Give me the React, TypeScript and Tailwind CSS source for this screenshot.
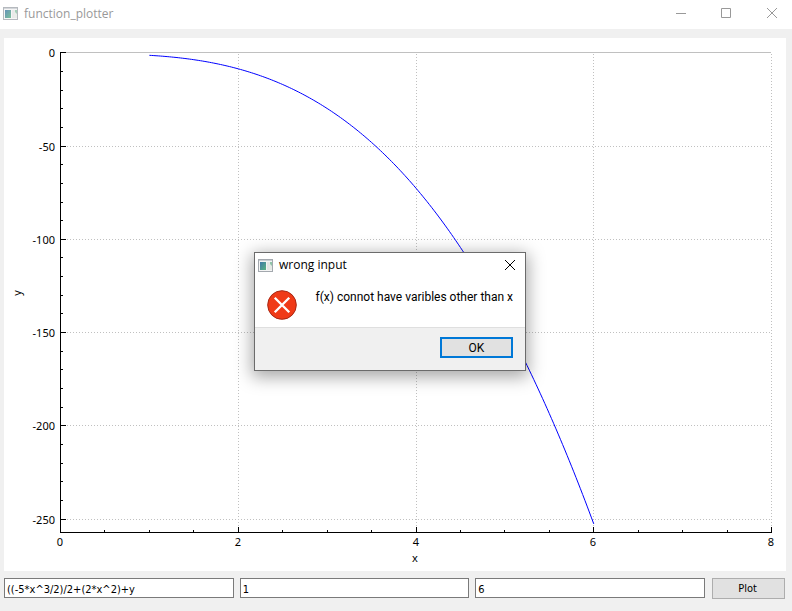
import React from "react";

const sx = (x: number) => 56.5 + (x * 711) / 8;
const sy = (y: number) => 14.8 - y * 1.865;

const curve = Array.from({ length: 201 }, (_, i) => {
  const x = 1 + (i * 5) / 200;
  const y = -1.25 * x ** 3 + 0.5 * x ** 2 - 0.6;
  return `${sx(x).toFixed(2)},${sy(y).toFixed(2)}`;
}).join(" ");

const xs = [0, 2, 4, 6, 8];
const ys = [0, -50, -100, -150, -200, -250];
const snap = (v: number) => Math.floor(v) + 0.5;

function AppIcon({ className = "" }: { className?: string }) {
  return (
    <svg className={"h-[13px] w-[15px] shrink-0 " + className} viewBox="0 0 15 13" aria-hidden="true">
      <defs>
        <linearGradient id="pane" x1="0" y1="0" x2="1" y2="1">
          <stop offset="0" stopColor="#3f78a8" />
          <stop offset="1" stopColor="#5bb381" />
        </linearGradient>
      </defs>
      <rect x=".5" y=".5" width="14" height="12" fill="#f4f4f4" stroke="#a3a8ae" />
      <rect x="1" y="1" width="13" height="1" fill="#c9cdd2" />
      <rect x="2" y="3" width="6" height="8" fill="url(#pane)" />
      <rect x="9" y="3" width="2" height="8" fill="#e4e4e4" />
      <rect x="11" y="3" width="3" height="8" fill="#e4e9e4" />
      <path d="M14 3V7L12 5V3Z" fill="#8fc4a8" />
    </svg>
  );
}

function Plot() {
  return (
    <svg className="block w-full" viewBox="0 0 782 533" fontSize="11" fill="#000" role="img" aria-label="Plot of the function">
      <g stroke="#c0c0c0" strokeDasharray="1 2" shapeRendering="crispEdges">
        {xs.slice(1).map((x) => (
          <line key={x} x1={snap(sx(x))} x2={snap(sx(x))} y1="494" y2="14" />
        ))}
        {ys.slice(1).map((y) => (
          <line key={y} x1="57" x2="767" y1={snap(sy(y))} y2={snap(sy(y))} />
        ))}
      </g>
      <line x1="57" x2="767" y1="14.5" y2="14.5" stroke="#c0c0c0" />
      <polyline points={curve} fill="none" stroke="#0000ff" strokeWidth="1" />
      <g stroke="#000" shapeRendering="crispEdges">
        <path d="M56.5 14V495M56 494.5H768" />
        {Array.from({ length: 17 }, (_, i) => (
          <line key={i} x1={snap(sx(i / 2))} x2={snap(sx(i / 2))} y1={i % 4 ? 492 : 489} y2="495" />
        ))}
        {Array.from({ length: 26 }, (_, i) => (
          <line key={i} x1="57" x2={i % 5 ? 59 : 62} y1={snap(sy(-i * 10))} y2={snap(sy(-i * 10))} />
        ))}
      </g>
      <g textAnchor="end">
        {ys.map((y) => (
          <text key={y} x="51" y={Math.floor(sy(y)) + 5}>{y}</text>
        ))}
      </g>
      <g textAnchor="middle">
        {xs.map((x) => (
          <text key={x} x={Math.floor(sx(x))} y="508">{x}</text>
        ))}
        <text x="411" y="524">x</text>
        <text transform="translate(17 255) rotate(-90)">y</text>
      </g>
    </svg>
  );
}

const field =
  "h-5 min-w-0 flex-1 border border-[#7a7a7a] bg-white px-0.5 pt-0.5 font-['DejaVu_Sans_Condensed','DejaVu_Sans',sans-serif] text-[11px] text-black outline-none";

export default function App() {
  return (
    <div className="relative flex min-h-screen flex-col bg-[#f0f0f0] font-['Noto_Sans',sans-serif] text-black">
      <header className="flex h-[29px] items-center bg-white pb-0.5 pl-[3px] text-xs text-[#999]">
        <AppIcon className="opacity-80" />
        <h1 className="ml-1.5 flex-1 font-['Open_Sans',sans-serif]">function_plotter</h1>
        <div className="flex">
          <button aria-label="Minimize" className="flex h-7 w-[45px] items-center justify-center">
            <svg className="size-[11px]" viewBox="0 0 11 11" stroke="#999"><path d="M0 5.5H10" /></svg>
          </button>
          <button aria-label="Maximize" className="flex h-7 w-[45px] items-center justify-center">
            <svg className="size-[11px]" viewBox="0 0 11 11" fill="none" stroke="#999"><path d="M.5 .5H9.5V9.5H.5Z" /></svg>
          </button>
          <button aria-label="Close" className="flex h-7 w-[43px] items-center justify-center pl-1">
            <svg className="size-[11px]" viewBox="0 0 11 11" stroke="#999"><path d="M0 0L10 10M10 0L0 10" /></svg>
          </button>
        </div>
      </header>
      <main className="flex flex-col gap-[7px] pt-[9px] pr-1.5 pl-1">
        <div className="bg-white"><Plot /></div>
        <form className="flex gap-1.5 pr-px" onSubmit={(e) => e.preventDefault()}>
          <input aria-label="Function of x" className={field} defaultValue="((-5*x^3/2)/2+(2*x^2)+y" />
          <input aria-label="Minimum x" className={field} defaultValue="1" />
          <input aria-label="Maximum x" className={field} defaultValue="6" />
          <button className="ml-px h-[21px] w-[73px] border border-[#adadad] bg-[#e1e1e1] pt-0.5 pr-0.5 font-['DejaVu_Sans_Condensed','DejaVu_Sans',sans-serif] text-[11px]">Plot</button>
        </form>
      </main>
      <div
        role="dialog"
        aria-labelledby="dialog-title"
        className="absolute top-[252px] left-[254px] flex w-[272px] flex-col border border-[#6b6b6b] bg-white font-['Open_Sans',sans-serif] text-xs shadow-[0_4px_16px_2px_rgba(0,0,0,0.35)]"
      >
        <div className="flex h-6 items-center pl-[3px]">
          <AppIcon />
          <h2 id="dialog-title" className="ml-1.5 flex-1">wrong input</h2>
          <button aria-label="Close dialog" className="flex h-6 w-[30px] items-center justify-center">
            <svg className="size-[11px]" viewBox="0 0 11 11" stroke="#000"><path d="M0 0L10 10M10 0L0 10" /></svg>
          </button>
        </div>
        <div className="flex h-[50px] items-start justify-between pt-3 pr-3 pl-3">
          <svg className="mt-px size-[30px]" viewBox="0 0 31 31" aria-hidden="true">
            <circle cx="15.5" cy="15.5" r="14.8" fill="#f03a17" stroke="#a52714" />
            <path d="M8 8L23 23M23 8L8 23" stroke="#fff" strokeWidth="2.4" />
          </svg>
          <p className="font-['Roboto',sans-serif] text-xs">f(x) connot have varibles other than x</p>
        </div>
        <div className="flex h-[43px] justify-end border-t border-[#dfdfdf] bg-[#f0f0f0] pt-[9px] pr-3">
          <button className="h-[21px] w-[73px] border-2 border-[#0078d7] bg-[#e1e1e1] font-['Roboto',sans-serif] leading-4">OK</button>
        </div>
      </div>
    </div>
  );
}
